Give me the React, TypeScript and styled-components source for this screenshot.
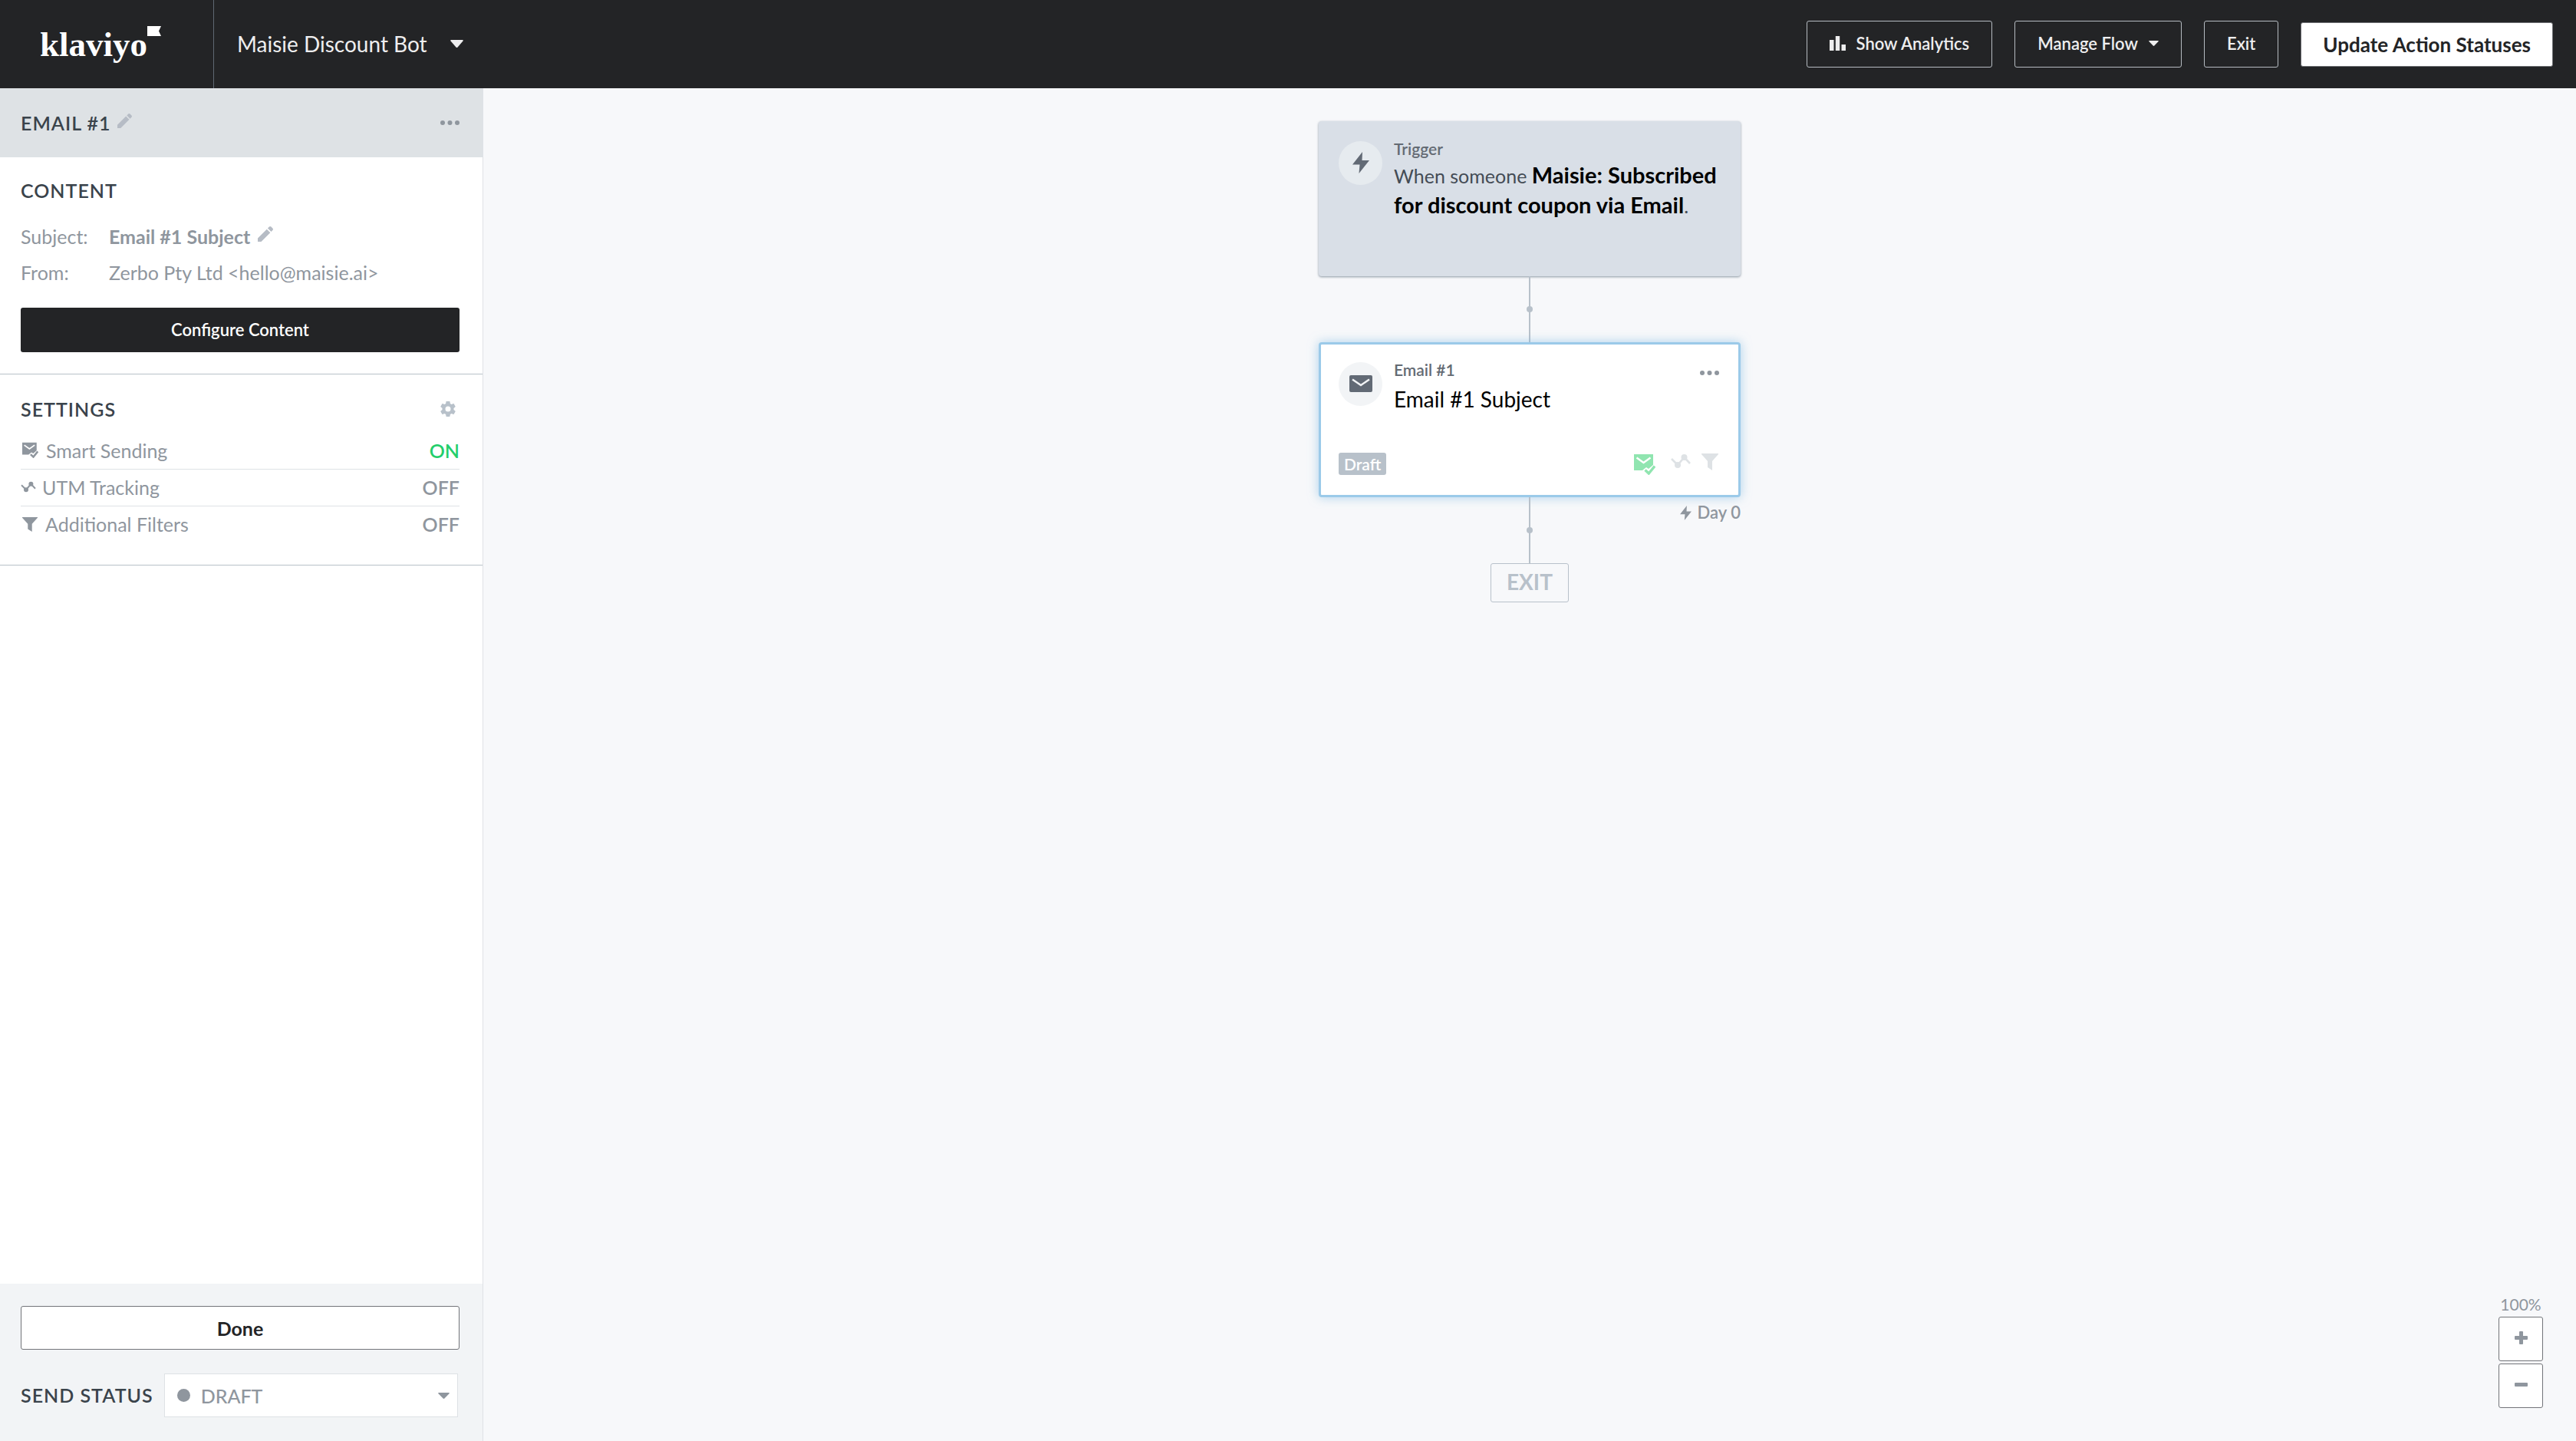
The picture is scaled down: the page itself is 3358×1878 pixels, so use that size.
import React from "react";
import styled, { createGlobalStyle, css } from "styled-components";

const GlobalStyle = createGlobalStyle`
  *, *::before, *::after { box-sizing: border-box; }
  html, body, #root { height: 100%; }
  body {
    margin: 0;
    font-family: Lato, "Open Sans", sans-serif;
    font-size: 25px;
    line-height: 30px;
    color: #8f969e;
    background: #f7f8fa;
  }
  button, select { font-family: inherit; margin: 0; }
  button { cursor: pointer; }
  h1, h2, p, dl, dd, dt, ul { margin: 0; padding: 0; font-weight: inherit; font-size: inherit; }
  svg { display: block; flex: none; }
`;

const Page = styled.div`
  min-height: 100%;
  display: flex;
  flex-direction: column;
`;

/* ---------- Top bar ---------- */

const TopBar = styled.header`
  flex: none;
  height: 115px;
  display: flex;
  align-items: center;
  padding-right: 30px;
  background: #232426;
`;

const LogoLink = styled.a`
  width: 279px;
  height: 100%;
  padding-left: 52px;
  display: flex;
  align-items: center;
  border-right: 1px solid #5f6872;
  color: #fff;
  text-decoration: none;
`;

const LogoWord = styled.span`
  font-family: "Liberation Serif", serif;
  font-weight: 700;
  font-size: 45px;
  line-height: 48px;
`;

const LogoFlag = styled.svg`
  align-self: flex-start;
  margin-top: 34px;
`;

const FlowPicker = styled.button`
  display: flex;
  align-items: center;
  gap: 30px;
  margin-left: 30px;
  padding: 0 0 2px;
  border: 0;
  background: none;
  color: #eeeeef;
  font-size: 28px;
  line-height: 36px;
`;

const Actions = styled.div`
  margin-left: auto;
  display: flex;
  align-items: center;
  gap: 29px;
`;

const BarButton = styled.button`
  height: 61px;
  display: flex;
  align-items: center;
  gap: 14px;
  padding: 0 29px 2px;
  border: 1px solid #b5bbc1;
  border-radius: 3px;
  background: transparent;
  color: #eeeeef;
  font-size: 22px;
  font-weight: 600;
  line-height: 28px;
`;

const PrimaryButton = styled(BarButton)`
  height: 58px;
  padding: 0 28px;
  border-color: #6d6f73;
  background: #fff;
  color: #232426;
  font-size: 26px;
  font-weight: 700;
`;

/* ---------- Sidebar ---------- */

const Body = styled.div`
  flex: 1;
  display: flex;
`;

const Sidebar = styled.aside`
  flex: none;
  width: 630px;
  display: flex;
  flex-direction: column;
  background: #fff;
  border-right: 1px solid #dfe2e6;
`;

const gutters = css`
  padding-left: 27px;
  padding-right: 30px;
`;

const heading = css`
  color: #3a434b;
  font-size: 25px;
  font-weight: 600;
  line-height: 30px;
  letter-spacing: 1px;
`;

const PanelTitle = styled.div`
  ${gutters}
  height: 90px;
  display: flex;
  align-items: center;
  gap: 8px;
  background: #dee2e5;
`;

const Heading = styled.h2`
  && { ${heading} }
`;

const IconButton = styled.button<{ $end?: boolean; $raised?: boolean; $tone?: string }>`
  display: flex;
  padding: 0 0 ${(p) => (p.$raised ? 6 : 0)}px;
  border: 0;
  background: none;
  color: ${(p) => p.$tone ?? "#b6bcc5"};
  margin-left: ${(p) => (p.$end ? "auto" : "0")};
`;

const Section = styled.section`
  ${gutters}
  padding-top: 28px;
  padding-bottom: 28px;
  border-bottom: 1px solid #b8c1c8;
`;

const Fields = styled.dl`
  margin: 22px 0;
`;

const Field = styled.div`
  height: 47px;
  display: grid;
  grid-template-columns: 115px 1fr;
  align-items: center;
  padding-bottom: 2px;
`;

const FieldValue = styled.dd<{ $strong?: boolean }>`
  display: flex;
  align-items: center;
  gap: 10px;
  && { font-weight: ${(p) => (p.$strong ? 700 : 400)}; }
`;

const DarkButton = styled.button`
  display: block;
  width: 100%;
  height: 58px;
  padding: 0 0 2px;
  border: 0;
  border-radius: 3px;
  background: #232426;
  color: #fff;
  font-size: 22px;
  font-weight: 600;
`;

const SectionHead = styled.div`
  display: flex;
  align-items: center;
  padding: 2px 5px 0 0;
`;

const SettingList = styled.ul`
  margin: 16px 0 0;
  list-style: none;
`;

const Setting = styled.li<{ $tight?: boolean }>`
  height: 48px;
  display: flex;
  align-items: center;
  gap: ${(p) => (p.$tight ? 8 : 10)}px;
  padding: 0 0 2px ${(p) => (p.$tight ? 0 : 2)}px;
  &:not(:last-child) { border-bottom: 1px solid #dee2e5; }
`;

const SettingState = styled.span<{ $on?: boolean }>`
  margin-left: auto;
  font-weight: 600;
  color: ${(p) => (p.$on ? "#23ce6b" : "#8f969e")};
`;

const SideFooter = styled.div`
  ${gutters}
  margin-top: auto;
  padding-top: 29px;
  padding-bottom: 31px;
  display: flex;
  flex-direction: column;
  gap: 31px;
  background: #f2f4f6;
`;

const DoneButton = styled.button`
  height: 57px;
  border: 1px solid #727479;
  border-radius: 3px;
  background: #fff;
  color: #232426;
  font-size: 25px;
  font-weight: 700;
`;

const StatusRow = styled.div`
  display: flex;
  align-items: center;
  gap: 14px;
  padding-right: 2px;
`;

const StatusLabel = styled.label`
  ${heading}
  padding-bottom: 2px;
`;

const SelectBox = styled.div`
  flex: 1;
  height: 57px;
  display: flex;
  align-items: center;
  padding: 0 10px 0 16px;
  border: 1px solid #dee2e5;
  background: #fff;
  color: #8f969e;
`;

const StatusDot = styled.span`
  width: 17px;
  height: 17px;
  border-radius: 50%;
  background: #8f969e;
`;

const StatusSelect = styled.select`
  flex: 1;
  height: 100%;
  padding: 0 0 0 14px;
  appearance: none;
  border: 0;
  background: transparent;
  color: #8f969e;
  font-size: 25px;
  font-weight: 500;
`;

/* ---------- Canvas ---------- */

const Canvas = styled.main`
  flex: 1;
  position: relative;
  padding-top: 43px;
  display: flex;
  flex-direction: column;
  align-items: center;
`;

const Card = styled.article<{ $kind: "trigger" | "selected" }>`
  width: 550px;
  min-height: 202px;
  display: flex;
  flex-direction: column;
  justify-content: space-between;
  border-radius: 4px;
  ${(p) =>
    p.$kind === "trigger"
      ? css`
          padding: 26px;
          background: #d9dfe7;
          box-shadow: 0 1px 3px rgba(110, 124, 138, 0.8);
        `
      : css`
          padding: 23px 23px 26px;
          background: #fff;
          border: 3px solid #9bcae9;
          box-shadow: 0 0 14px rgba(120, 184, 226, 0.6);
        `}
`;

const CardHead = styled.div`
  display: flex;
  align-items: flex-start;
  gap: 15px;
`;

const Badge = styled.span<{ $bg: string }>`
  flex: none;
  width: 57px;
  height: 57px;
  padding-bottom: 2px;
  border-radius: 50%;
  display: flex;
  align-items: center;
  justify-content: center;
  background: ${(p) => p.$bg};
  color: #626a75;
`;

const CardText = styled.div<{ $gap: number }>`
  flex: 1;
  display: flex;
  flex-direction: column;
  gap: ${(p) => p.$gap}px;
`;

const CardLabel = styled.span`
  color: #646b74;
  font-size: 21px;
  font-weight: 600;
  line-height: 20px;
`;

const TriggerText = styled.p`
  color: #444c55;
  line-height: 38px;
  strong { color: #000; font-size: 29px; font-weight: 700; }
`;

const CardSubject = styled.p`
  && { font-size: 28px; }
  color: #000;
  line-height: 38px;
`;

const CardMenu = styled.div`
  padding: 11px 2px 0 0;
`;

const CardFoot = styled.div`
  display: flex;
  align-items: center;
`;

const DraftTag = styled.span`
  padding: 0 7px;
  border-radius: 3px;
  background: #b8c1ca;
  color: #fff;
  font-size: 21px;
  font-weight: 600;
  line-height: 29px;
`;

const CardIcons = styled.div`
  margin-left: auto;
  padding-right: 3px;
  display: flex;
  align-items: flex-start;
  gap: 14px;
  color: #dee2e5;
  svg:first-child { color: #90e5b0; margin-right: 6px; }
`;

const Connector = styled.div`
  width: 550px;
  height: 86px;
  display: grid;
  grid-template-columns: 1fr 8px 1fr;
`;

const Line = styled.span`
  grid-column: 2;
  display: flex;
  align-items: center;
  background: linear-gradient(#b8c1ca, #b8c1ca) center / 2px 100% no-repeat;
  &::after {
    content: "";
    width: 8px;
    height: 8px;
    border-radius: 50%;
    background: #b8c1ca;
  }
`;

const Delay = styled.span`
  grid-column: 3;
  justify-self: end;
  height: 26px;
  margin-top: 7px;
  display: flex;
  align-items: center;
  gap: 8px;
  color: #8f969e;
  font-size: 22px;
  font-weight: 600;
  line-height: 26px;
`;

const ExitNode = styled.div`
  width: 102px;
  height: 51px;
  border: 1px solid #b8c1ca;
  border-radius: 3px;
  color: #b8c1ca;
  font-size: 28px;
  font-weight: 700;
  line-height: 47px;
  text-align: center;
`;

const ZoomPanel = styled.div`
  position: absolute;
  right: 43px;
  bottom: 43px;
  display: flex;
  flex-direction: column;
  align-items: center;
  gap: 3px;
`;

const ZoomLevel = styled.span`
  font-size: 21px;
  line-height: 26px;
`;

const ZoomButton = styled.button`
  width: 58px;
  height: 58px;
  display: flex;
  align-items: center;
  justify-content: center;
  padding: 0 0 4px;
  border: 1px solid #727479;
  border-radius: 3px;
  background: #fff;
  color: #8f969e;
`;

/* ---------- Icons ---------- */

const Caret = ({ w, h }: { w: number; h: number }) => (
  <svg width={w} height={h} viewBox="0 0 16 10" preserveAspectRatio="none" fill="currentColor" aria-hidden>
    <path d="M1 0h14q1.300.5.500 1.500L9 9.400q-1 1-2 0L.500 1.500Q-.300.500 1 0z" />
  </svg>
);

const Pencil = ({ size = 20 }: { size?: number }) => (
  <svg width={size} height={size} viewBox="0 0 20 20" fill="currentColor" aria-hidden>
    <path d="M0 15.500 11.800 3.700l4.500 4.500L4.500 20H0zM13 2.500 14.900.600q1.300-1.200 2.600 0l1.900 1.900q1.200 1.300 0 2.600L17.500 7z" />
  </svg>
);

const Dots = ({ w = 25 }: { w?: number }) => (
  <svg width={w} height="6" viewBox="0 0 25 6" fill="currentColor" aria-hidden>
    <circle cx="3" cy="3" r="3" />
    <circle cx="12.500" cy="3" r="3" />
    <circle cx="22" cy="3" r="3" />
  </svg>
);

const Gear = () => (
  <svg width="20" height="20" viewBox="2 2 20 20" fill="currentColor" aria-hidden>
    <path d="M19.430 12.980c.04-.32.07-.64.07-.98s-.03-.66-.07-.98l2.110-1.650c.19-.15.24-.42.12-.64l-2-3.460c-.12-.22-.39-.3-.61-.22l-2.490 1c-.52-.4-1.080-.73-1.690-.98l-.38-2.650C14.460 2.180 14.250 2 14 2h-4c-.25 0-.46.18-.49.42l-.38 2.650c-.61.25-1.170.59-1.690.98l-2.490-1c-.23-.09-.49 0-.61.22l-2 3.460c-.13.22-.07.49.12.64l2.110 1.650c-.04.32-.07.65-.07.98s.03.66.07.98l-2.110 1.650c-.19.15-.24.42-.12.64l2 3.460c.12.22.39.3.61.22l2.490-1c.52.4 1.080.73 1.690.98l.38 2.650c.03.24.24.42.49.42h4c.25 0 .46-.18.49-.42l.38-2.650c.61-.25 1.170-.59 1.690-.98l2.490 1c.23.09.49 0 .61-.22l2-3.460c.12-.22.07-.49-.12-.64l-2.110-1.650zM12 15.500a3.500 3.500 0 1 1 0-7 3.500 3.500 0 0 1 0 7z" />
  </svg>
);

const MailCheck = ({ size }: { size: number }) => (
  <svg width={size} height={size} viewBox="0 0 28 28" fill="none" aria-hidden>
    <path d="M0 1h25v14l-6 5-3-2-5 4H0z" fill="currentColor" />
    <path d="M3.500 5.500 12.500 12l9-6.500" stroke="#fff" strokeWidth="2.400" />
    <path d="M14 21.500l5.500 5L29 16" stroke="#fff" strokeWidth="7" />
    <path d="M14.500 21.500l4.800 4.500L27 16.500" stroke="currentColor" strokeWidth="3.400" />
  </svg>
);

const Trend = ({ w, h }: { w: number; h: number }) => (
  <svg width={w} height={h} viewBox="0 0 26 20" fill="none" aria-hidden>
    <path d="M1 7l8 8L17.500 5 25 13" stroke="currentColor" strokeWidth="2.600" />
    <circle cx="9" cy="15" r="4" fill="currentColor" />
    <circle cx="17.500" cy="5" r="4" fill="currentColor" />
  </svg>
);

const Funnel = ({ w, h }: { w: number; h: number }) => (
  <svg width={w} height={h} viewBox="0 0 22 22" preserveAspectRatio="none" fill="currentColor" aria-hidden>
    <path d="M0 0h22v1l-8 9v12l-6-4v-8L0 1z" />
  </svg>
);

const Bolt = ({ w, h }: { w: number; h: number }) => (
  <svg width={w} height={h} viewBox="0 0 22 28" fill="currentColor" aria-hidden>
    <path d="M13 0 0 16.500h9.500L8.500 28 22 11h-9.500z" />
  </svg>
);

const Envelope = () => (
  <svg width="30" height="22" viewBox="0 0 30 22" aria-hidden>
    <rect width="30" height="22" rx="2" fill="currentColor" />
    <path d="M4 5.500 15 13l11-7.500" fill="none" stroke="#f2f4f6" strokeWidth="2.400" />
  </svg>
);

const Bars = () => (
  <svg width="21" height="19" viewBox="0 0 21 19" fill="currentColor" aria-hidden>
    <path d="M0 5h5.500v14H0zM7.800 0h5.400v19H7.800zM15.500 11H21v8h-5.500z" />
  </svg>
);

export default function App() {
  return (
    <Page>
      <GlobalStyle />
      <TopBar>
        <LogoLink href="#" aria-label="klaviyo home">
          <LogoWord>klaviyo</LogoWord>
          <LogoFlag width="18" height="16" viewBox="0 0 18 16" preserveAspectRatio="none" fill="currentColor" aria-hidden>
            <path d="M0 0h18l-3 6.500 3 6.500H0z" />
          </LogoFlag>
        </LogoLink>
        <FlowPicker type="button">
          Maisie Discount Bot
          <Caret w={17} h={10} />
        </FlowPicker>
        <Actions>
          <BarButton type="button"><Bars />Show Analytics</BarButton>
          <BarButton type="button">Manage Flow<Caret w={13} h={7} /></BarButton>
          <BarButton type="button">Exit</BarButton>
          <PrimaryButton type="button">Update Action Statuses</PrimaryButton>
        </Actions>
      </TopBar>

      <Body>
        <Sidebar>
          <PanelTitle>
            <Heading as="h1">EMAIL #1</Heading>
            <IconButton type="button" aria-label="Rename" $raised><Pencil size={19} /></IconButton>
            <IconButton type="button" aria-label="More" $end $tone="#8f969e"><Dots /></IconButton>
          </PanelTitle>

          <Section>
            <Heading>CONTENT</Heading>
            <Fields>
              <Field>
                <dt>Subject:</dt>
                <FieldValue $strong>
                  Email #1 Subject
                  <IconButton type="button" aria-label="Edit subject" $raised><Pencil /></IconButton>
                </FieldValue>
              </Field>
              <Field>
                <dt>From:</dt>
                <FieldValue>Zerbo Pty Ltd &lt;hello@maisie.ai&gt;</FieldValue>
              </Field>
            </Fields>
            <DarkButton type="button">Configure Content</DarkButton>
          </Section>

          <Section>
            <SectionHead>
              <Heading>SETTINGS</Heading>
              <IconButton type="button" aria-label="Edit settings" $end $tone="#b8c1ca"><Gear /></IconButton>
            </SectionHead>
            <SettingList>
              <Setting><MailCheck size={21} />Smart Sending<SettingState $on>ON</SettingState></Setting>
              <Setting $tight><Trend w={20} h={15} />UTM Tracking<SettingState>OFF</SettingState></Setting>
              <Setting><Funnel w={20} h={19} />Additional Filters<SettingState>OFF</SettingState></Setting>
            </SettingList>
          </Section>

          <SideFooter>
            <DoneButton type="button">Done</DoneButton>
            <StatusRow>
              <StatusLabel htmlFor="send-status">SEND STATUS</StatusLabel>
              <SelectBox>
                <StatusDot />
                <StatusSelect id="send-status" defaultValue="draft">
                  <option value="draft">DRAFT</option>
                </StatusSelect>
                <Caret w={15} h={8} />
              </SelectBox>
            </StatusRow>
          </SideFooter>
        </Sidebar>

        <Canvas>
          <Card $kind="trigger">
            <CardHead>
              <Badge $bg="#e6ebef"><Bolt w={22} h={28} /></Badge>
              <CardText $gap={5}>
                <CardLabel>Trigger</CardLabel>
                <TriggerText>
                  When someone <strong>Maisie: Subscribed</strong>{" "}
                  <strong>for discount coupon via Email</strong>.
                </TriggerText>
              </CardText>
            </CardHead>
          </Card>
          <Connector><Line /></Connector>
          <Card $kind="selected">
            <CardHead>
              <Badge $bg="#f2f4f6"><Envelope /></Badge>
              <CardText $gap={9}>
                <CardLabel>Email #1</CardLabel>
                <CardSubject>Email #1 Subject</CardSubject>
              </CardText>
              <CardMenu>
                <IconButton type="button" aria-label="Email options" $tone="#8f969e"><Dots /></IconButton>
              </CardMenu>
            </CardHead>
            <CardFoot>
              <DraftTag>Draft</DraftTag>
              <CardIcons>
                <MailCheck size={28} />
                <Trend w={26} h={20} />
                <Funnel w={22} h={22} />
              </CardIcons>
            </CardFoot>
          </Card>
          <Connector>
            <Line />
            <Delay><Bolt w={15} h={19} />Day 0</Delay>
          </Connector>
          <ExitNode>EXIT</ExitNode>

          <ZoomPanel>
            <ZoomLevel>100%</ZoomLevel>
            <ZoomButton type="button" aria-label="Zoom in">
              <svg width="17" height="17" viewBox="0 0 17 17" fill="currentColor" aria-hidden>
                <rect x="6" width="5" height="17" rx="1" />
                <rect y="6" width="17" height="5" rx="1" />
              </svg>
            </ZoomButton>
            <ZoomButton type="button" aria-label="Zoom out">
              <svg width="17" height="17" viewBox="0 0 17 17" fill="currentColor" aria-hidden>
                <rect y="6" width="17" height="5" rx="1" />
              </svg>
            </ZoomButton>
          </ZoomPanel>
        </Canvas>
      </Body>
    </Page>
  );
}
